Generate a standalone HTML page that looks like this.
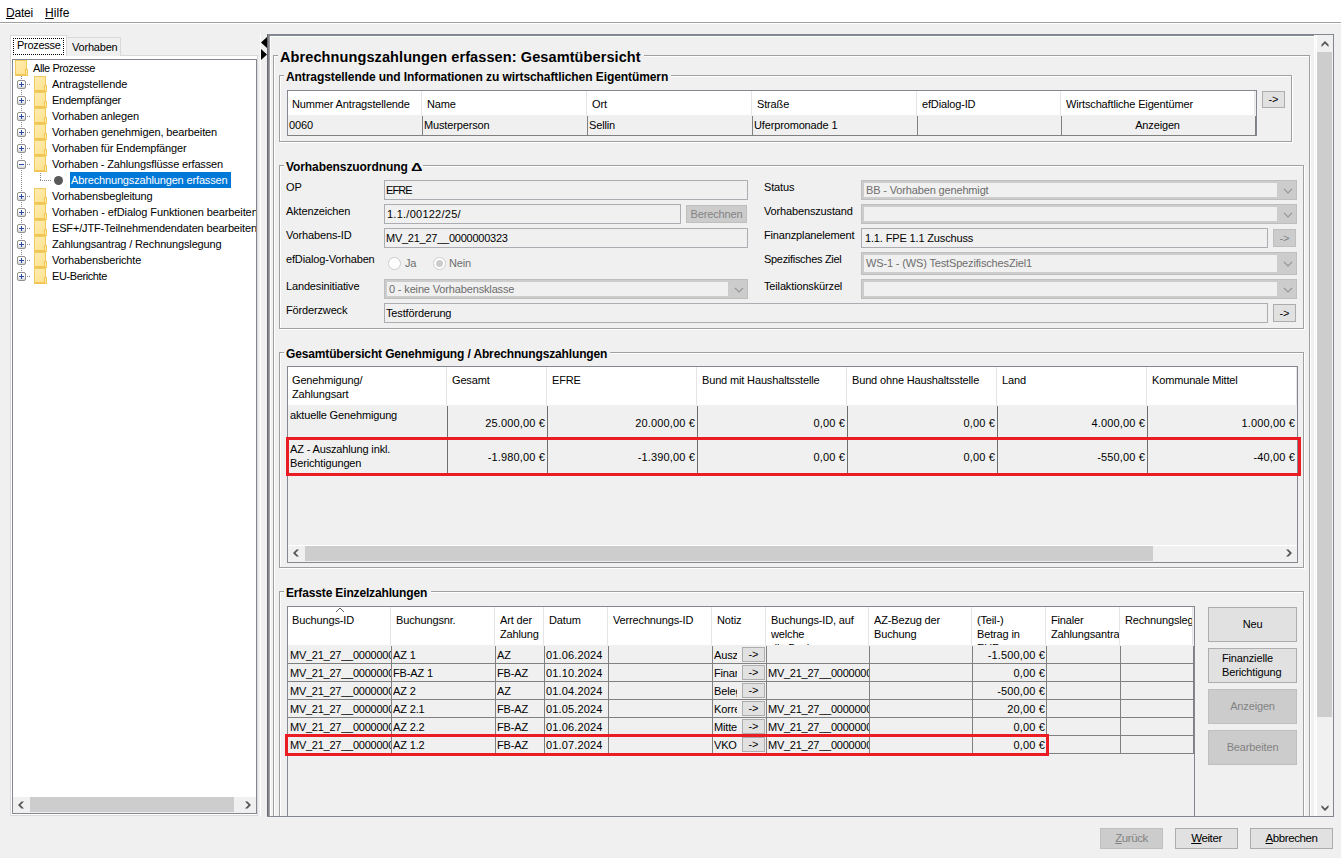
<!DOCTYPE html><html lang="de"><head><meta charset="utf-8"><title>Abrechnungszahlungen erfassen</title><style>
html,body{margin:0;padding:0}
body{width:1341px;height:858px;background:#F0F0F0;position:relative;overflow:hidden;font-family:"Liberation Sans",sans-serif;font-size:11px;color:#000}
div{position:absolute;box-sizing:border-box}
.t{font-size:11px;line-height:13px;height:13px;white-space:nowrap;letter-spacing:-0.15px}
.g{color:#6D6D6D}
.n{letter-spacing:0.15px}
.m{letter-spacing:-0.25px}
.u{font-size:12px;line-height:14px;height:14px;white-space:nowrap}
.ub{font-size:11.5px;letter-spacing:-0.4px}
.eh{border:1px solid #FFFFFF}
.es{border:1px solid #A0A0A0}
.gt{height:14px;line-height:14px;background:#F0F0F0;font-weight:bold;font-size:12px;white-space:nowrap;padding-left:2px;letter-spacing:-0.08px;overflow:hidden}
.tf{border:1px solid #ABADB3;background:#F0F0F0}
.cb{border:3px solid #CCCCCC;background:#F0F0F0}
.cba{background:#CCCCCC}
.btn{background:#E1E1E1;border:1px solid #ADADAD}
.btd{background:#CCCCCC;border:1px solid #BFBFBF}
.tbl{border:1px solid #828790;background:#F0F0F0}
.hd{background:#FFFFFF}
.hs{background:#E5E5E5;width:1px}
.vg{background:#808080;width:1px}
.hg{background:#808080;height:1px}
.clip{overflow:hidden}
.red{border:3px solid #EB1C24}
.tr{font-size:11px;line-height:16px;height:16px;white-space:nowrap;letter-spacing:-0.15px}
.sb{background:#CDCDCD}
svg{position:absolute;overflow:visible}
</style></head><body>
<div style="left:0px;top:0px;width:1341px;height:22px;background:#FFFFFF"></div>
<div style="left:0px;top:22px;width:1341px;height:1px;background:#A0A0A0"></div>
<div style="left:0px;top:23px;width:1341px;height:1px;background:#FFFFFF"></div>
<div class="u" style="left:6px;top:6px;letter-spacing:-0.2px"><u>D</u>atei</div>
<div class="u" style="left:45px;top:6px;letter-spacing:0.1px"><u>H</u>ilfe</div>
<div style="left:10px;top:55px;width:248px;height:761px;border:1px solid #D9D9D9;background:#FFFFFF"></div>
<div style="left:66px;top:37px;width:55px;height:19px;border:1px solid #D9D9D9;border-bottom:none;background:#F0F0F0"></div>
<div style="left:10px;top:35px;width:57px;height:21px;border:1px solid #D9D9D9;border-bottom:none;background:#FFFFFF"></div>
<div style="left:13px;top:38px;width:51px;height:17px;border:1px dotted #000000"></div>
<div class="t" style="left:17px;top:39px;letter-spacing:-0.3px">Prozesse</div>
<div class="t" style="left:72px;top:41px;letter-spacing:-0.2px">Vorhaben</div>
<div style="left:12px;top:59px;width:245px;height:755px;border:1px solid #828790;background:#FFFFFF"></div>
<div class="clip" style="left:13px;top:60px;width:243px;height:737px">
<div style="left:8px;top:16px;width:1px;height:200px;background:repeating-linear-gradient(#8A8A8A 0 1px,transparent 1px 2px)"></div>
<div style="left:2px;top:0px;width:12px;height:16px;border:1px solid #F2CB5E;border-bottom:2px solid #F0C657;background:linear-gradient(135deg,#FFECB0 0%,#FFE28F 100%)"></div>
<div style="left:12px;top:9px;width:3px;height:7px;border:1px solid #F0C657;background:#FFE9A6"></div>
<div class="tr" style="left:20px;top:0px;letter-spacing:-0.4px">Alle Prozesse</div>
<div style="left:14px;top:24px;width:4px;height:1px;background:repeating-linear-gradient(90deg,#8A8A8A 0 1px,transparent 1px 2px)"></div>
<div style="left:4px;top:20px;width:9px;height:9px;border:1px solid #919191;border-radius:2px;background:linear-gradient(#FFFFFF 40%,#D5D5D5 100%)"></div>
<div style="left:6px;top:24px;width:5px;height:1px;background:#2A48A6"></div>
<div style="left:8px;top:22px;width:1px;height:5px;background:#2A48A6"></div>
<div style="left:21px;top:16px;width:12px;height:16px;border:1px solid #F2CB5E;border-bottom:2px solid #F0C657;background:linear-gradient(135deg,#FFECB0 0%,#FFE28F 100%)"></div>
<div style="left:31px;top:25px;width:3px;height:7px;border:1px solid #F0C657;background:#FFE9A6"></div>
<div class="tr" style="left:39px;top:16px;letter-spacing:-0.08px">Antragstellende</div>
<div style="left:14px;top:40px;width:4px;height:1px;background:repeating-linear-gradient(90deg,#8A8A8A 0 1px,transparent 1px 2px)"></div>
<div style="left:4px;top:36px;width:9px;height:9px;border:1px solid #919191;border-radius:2px;background:linear-gradient(#FFFFFF 40%,#D5D5D5 100%)"></div>
<div style="left:6px;top:40px;width:5px;height:1px;background:#2A48A6"></div>
<div style="left:8px;top:38px;width:1px;height:5px;background:#2A48A6"></div>
<div style="left:21px;top:32px;width:12px;height:16px;border:1px solid #F2CB5E;border-bottom:2px solid #F0C657;background:linear-gradient(135deg,#FFECB0 0%,#FFE28F 100%)"></div>
<div style="left:31px;top:41px;width:3px;height:7px;border:1px solid #F0C657;background:#FFE9A6"></div>
<div class="tr" style="left:39px;top:32px;letter-spacing:-0.27px">Endempfänger</div>
<div style="left:14px;top:56px;width:4px;height:1px;background:repeating-linear-gradient(90deg,#8A8A8A 0 1px,transparent 1px 2px)"></div>
<div style="left:4px;top:52px;width:9px;height:9px;border:1px solid #919191;border-radius:2px;background:linear-gradient(#FFFFFF 40%,#D5D5D5 100%)"></div>
<div style="left:6px;top:56px;width:5px;height:1px;background:#2A48A6"></div>
<div style="left:8px;top:54px;width:1px;height:5px;background:#2A48A6"></div>
<div style="left:21px;top:48px;width:12px;height:16px;border:1px solid #F2CB5E;border-bottom:2px solid #F0C657;background:linear-gradient(135deg,#FFECB0 0%,#FFE28F 100%)"></div>
<div style="left:31px;top:57px;width:3px;height:7px;border:1px solid #F0C657;background:#FFE9A6"></div>
<div class="tr" style="left:39px;top:48px">Vorhaben anlegen</div>
<div style="left:14px;top:72px;width:4px;height:1px;background:repeating-linear-gradient(90deg,#8A8A8A 0 1px,transparent 1px 2px)"></div>
<div style="left:4px;top:68px;width:9px;height:9px;border:1px solid #919191;border-radius:2px;background:linear-gradient(#FFFFFF 40%,#D5D5D5 100%)"></div>
<div style="left:6px;top:72px;width:5px;height:1px;background:#2A48A6"></div>
<div style="left:8px;top:70px;width:1px;height:5px;background:#2A48A6"></div>
<div style="left:21px;top:64px;width:12px;height:16px;border:1px solid #F2CB5E;border-bottom:2px solid #F0C657;background:linear-gradient(135deg,#FFECB0 0%,#FFE28F 100%)"></div>
<div style="left:31px;top:73px;width:3px;height:7px;border:1px solid #F0C657;background:#FFE9A6"></div>
<div class="tr" style="left:39px;top:64px;letter-spacing:-0.12px">Vorhaben genehmigen, bearbeiten</div>
<div style="left:14px;top:88px;width:4px;height:1px;background:repeating-linear-gradient(90deg,#8A8A8A 0 1px,transparent 1px 2px)"></div>
<div style="left:4px;top:84px;width:9px;height:9px;border:1px solid #919191;border-radius:2px;background:linear-gradient(#FFFFFF 40%,#D5D5D5 100%)"></div>
<div style="left:6px;top:88px;width:5px;height:1px;background:#2A48A6"></div>
<div style="left:8px;top:86px;width:1px;height:5px;background:#2A48A6"></div>
<div style="left:21px;top:80px;width:12px;height:16px;border:1px solid #F2CB5E;border-bottom:2px solid #F0C657;background:linear-gradient(135deg,#FFECB0 0%,#FFE28F 100%)"></div>
<div style="left:31px;top:89px;width:3px;height:7px;border:1px solid #F0C657;background:#FFE9A6"></div>
<div class="tr" style="left:39px;top:80px">Vorhaben für Endempfänger</div>
<div style="left:14px;top:104px;width:4px;height:1px;background:repeating-linear-gradient(90deg,#8A8A8A 0 1px,transparent 1px 2px)"></div>
<div style="left:4px;top:100px;width:9px;height:9px;border:1px solid #919191;border-radius:2px;background:linear-gradient(#FFFFFF 40%,#D5D5D5 100%)"></div>
<div style="left:6px;top:104px;width:5px;height:1px;background:#2A48A6"></div>
<div style="left:21px;top:96px;width:12px;height:16px;border:1px solid #F2CB5E;border-bottom:2px solid #F0C657;background:linear-gradient(135deg,#FFECB0 0%,#FFE28F 100%)"></div>
<div style="left:31px;top:105px;width:3px;height:7px;border:1px solid #F0C657;background:#FFE9A6"></div>
<div class="tr" style="left:39px;top:96px">Vorhaben - Zahlungsflüsse erfassen</div>
<div style="left:27px;top:113px;width:1px;height:7px;background:repeating-linear-gradient(#8A8A8A 0 1px,transparent 1px 2px)"></div>
<div style="left:27px;top:120px;width:11px;height:1px;background:repeating-linear-gradient(90deg,#8A8A8A 0 1px,transparent 1px 2px)"></div>
<div style="left:41px;top:116px;width:9px;height:9px;border-radius:50%;background:#5A5A5A"></div>
<div class="tr" style="left:57px;top:112px;width:161px;background:#0078D7;color:#FFFFFF;padding-left:1px">Abrechnungszahlungen erfassen</div>
<div style="left:14px;top:136px;width:4px;height:1px;background:repeating-linear-gradient(90deg,#8A8A8A 0 1px,transparent 1px 2px)"></div>
<div style="left:4px;top:132px;width:9px;height:9px;border:1px solid #919191;border-radius:2px;background:linear-gradient(#FFFFFF 40%,#D5D5D5 100%)"></div>
<div style="left:6px;top:136px;width:5px;height:1px;background:#2A48A6"></div>
<div style="left:8px;top:134px;width:1px;height:5px;background:#2A48A6"></div>
<div style="left:21px;top:128px;width:12px;height:16px;border:1px solid #F2CB5E;border-bottom:2px solid #F0C657;background:linear-gradient(135deg,#FFECB0 0%,#FFE28F 100%)"></div>
<div style="left:31px;top:137px;width:3px;height:7px;border:1px solid #F0C657;background:#FFE9A6"></div>
<div class="tr" style="left:39px;top:128px">Vorhabensbegleitung</div>
<div style="left:14px;top:152px;width:4px;height:1px;background:repeating-linear-gradient(90deg,#8A8A8A 0 1px,transparent 1px 2px)"></div>
<div style="left:4px;top:148px;width:9px;height:9px;border:1px solid #919191;border-radius:2px;background:linear-gradient(#FFFFFF 40%,#D5D5D5 100%)"></div>
<div style="left:6px;top:152px;width:5px;height:1px;background:#2A48A6"></div>
<div style="left:8px;top:150px;width:1px;height:5px;background:#2A48A6"></div>
<div style="left:21px;top:144px;width:12px;height:16px;border:1px solid #F2CB5E;border-bottom:2px solid #F0C657;background:linear-gradient(135deg,#FFECB0 0%,#FFE28F 100%)"></div>
<div style="left:31px;top:153px;width:3px;height:7px;border:1px solid #F0C657;background:#FFE9A6"></div>
<div class="tr" style="left:39px;top:144px;letter-spacing:-0.1px">Vorhaben - efDialog Funktionen bearbeiten</div>
<div style="left:14px;top:168px;width:4px;height:1px;background:repeating-linear-gradient(90deg,#8A8A8A 0 1px,transparent 1px 2px)"></div>
<div style="left:4px;top:164px;width:9px;height:9px;border:1px solid #919191;border-radius:2px;background:linear-gradient(#FFFFFF 40%,#D5D5D5 100%)"></div>
<div style="left:6px;top:168px;width:5px;height:1px;background:#2A48A6"></div>
<div style="left:8px;top:166px;width:1px;height:5px;background:#2A48A6"></div>
<div style="left:21px;top:160px;width:12px;height:16px;border:1px solid #F2CB5E;border-bottom:2px solid #F0C657;background:linear-gradient(135deg,#FFECB0 0%,#FFE28F 100%)"></div>
<div style="left:31px;top:169px;width:3px;height:7px;border:1px solid #F0C657;background:#FFE9A6"></div>
<div class="tr" style="left:39px;top:160px">ESF+/JTF-Teilnehmendendaten bearbeiten</div>
<div style="left:14px;top:184px;width:4px;height:1px;background:repeating-linear-gradient(90deg,#8A8A8A 0 1px,transparent 1px 2px)"></div>
<div style="left:4px;top:180px;width:9px;height:9px;border:1px solid #919191;border-radius:2px;background:linear-gradient(#FFFFFF 40%,#D5D5D5 100%)"></div>
<div style="left:6px;top:184px;width:5px;height:1px;background:#2A48A6"></div>
<div style="left:8px;top:182px;width:1px;height:5px;background:#2A48A6"></div>
<div style="left:21px;top:176px;width:12px;height:16px;border:1px solid #F2CB5E;border-bottom:2px solid #F0C657;background:linear-gradient(135deg,#FFECB0 0%,#FFE28F 100%)"></div>
<div style="left:31px;top:185px;width:3px;height:7px;border:1px solid #F0C657;background:#FFE9A6"></div>
<div class="tr" style="left:39px;top:176px">Zahlungsantrag / Rechnungslegung</div>
<div style="left:14px;top:200px;width:4px;height:1px;background:repeating-linear-gradient(90deg,#8A8A8A 0 1px,transparent 1px 2px)"></div>
<div style="left:4px;top:196px;width:9px;height:9px;border:1px solid #919191;border-radius:2px;background:linear-gradient(#FFFFFF 40%,#D5D5D5 100%)"></div>
<div style="left:6px;top:200px;width:5px;height:1px;background:#2A48A6"></div>
<div style="left:8px;top:198px;width:1px;height:5px;background:#2A48A6"></div>
<div style="left:21px;top:192px;width:12px;height:16px;border:1px solid #F2CB5E;border-bottom:2px solid #F0C657;background:linear-gradient(135deg,#FFECB0 0%,#FFE28F 100%)"></div>
<div style="left:31px;top:201px;width:3px;height:7px;border:1px solid #F0C657;background:#FFE9A6"></div>
<div class="tr" style="left:39px;top:192px">Vorhabensberichte</div>
<div style="left:14px;top:216px;width:4px;height:1px;background:repeating-linear-gradient(90deg,#8A8A8A 0 1px,transparent 1px 2px)"></div>
<div style="left:4px;top:212px;width:9px;height:9px;border:1px solid #919191;border-radius:2px;background:linear-gradient(#FFFFFF 40%,#D5D5D5 100%)"></div>
<div style="left:6px;top:216px;width:5px;height:1px;background:#2A48A6"></div>
<div style="left:8px;top:214px;width:1px;height:5px;background:#2A48A6"></div>
<div style="left:21px;top:208px;width:12px;height:16px;border:1px solid #F2CB5E;border-bottom:2px solid #F0C657;background:linear-gradient(135deg,#FFECB0 0%,#FFE28F 100%)"></div>
<div style="left:31px;top:217px;width:3px;height:7px;border:1px solid #F0C657;background:#FFE9A6"></div>
<div class="tr" style="left:39px;top:208px;letter-spacing:-0.4px">EU-Berichte</div>
</div>
<div style="left:13px;top:797px;width:243px;height:16px;background:#F0F0F0"></div>
<div class="sb" style="left:30px;top:797px;width:204px;height:15px;"></div>
<svg style="left:21px;top:805px" width="1" height="1"><polygon points="-3,0 0.5,-3.5 3,-3.5 -0.5,0 3,3.5 0.5,3.5" fill="#555555"/></svg>
<svg style="left:248px;top:805px" width="1" height="1"><polygon points="3,0 -0.5,-3.5 -3,-3.5 0.5,0 -3,3.5 -0.5,3.5" fill="#555555"/></svg>
<div style="left:260px;top:34px;width:1px;height:782px;background:#FFFFFF"></div>
<svg style="left:261px;top:37px" width="7" height="24"><polygon points="0,5.5 6,0 6,11" fill="#000"/><polygon points="0,12 6,17.5 0,23" fill="#000"/></svg>
<div style="left:267px;top:34px;width:1067px;height:783px;border:1px solid #828790"></div>
<div style="left:268px;top:35px;width:1046px;height:781px;border:1px solid #828790;border-right:none;border-bottom:none"></div>
<div style="left:269px;top:36px;width:1045px;height:1px;background:#FFFFFF"></div>
<div style="left:267px;top:34px;width:1px;height:783px;background:#6A6A6A"></div>
<div style="left:269px;top:36px;width:1px;height:780px;background:#A0A0A0"></div>
<div style="left:270px;top:37px;width:1px;height:779px;background:#FFFFFF"></div>
<div style="left:1314px;top:35px;width:3px;height:781px;background:#FFFFFF"></div>
<div style="left:1315px;top:35px;width:1px;height:781px;background:#F6F6F6"></div>
<div style="left:1317px;top:35px;width:16px;height:781px;background:#F0F0F0"></div>
<div class="sb" style="left:1317px;top:52px;width:15px;height:665px;"></div>
<svg style="left:1324.5px;top:44px" width="1" height="1"><polygon points="0,-3 -3.5,0.5 -3.5,3 0,-0.5 3.5,3 3.5,0.5" fill="#555555"/></svg>
<svg style="left:1324.5px;top:808px" width="1" height="1"><polygon points="0,3 -3.5,-0.5 -3.5,-3 0,0.5 3.5,-3 3.5,-0.5" fill="#555555"/></svg>
<div class="eh" style="left:274px;top:56px;width:1037px;height:780px"></div>
<div class="es" style="left:273px;top:55px;width:1037px;height:780px"></div>
<div style="left:278px;top:48px;width:366px;height:18px;background:#F0F0F0;font-weight:bold;font-size:14.5px;line-height:18px;white-space:nowrap;padding-left:2px;letter-spacing:0.1px">Abrechnungszahlungen erfassen: Gesamtübersicht</div>
<div class="eh" style="left:280px;top:76px;width:1013px;height:67px"></div>
<div class="es" style="left:279px;top:75px;width:1013px;height:67px"></div>
<div class="gt" style="left:284px;top:70px;width:387px;letter-spacing:-0.08px"><span>Antragstellende und Informationen zu wirtschaftlichen Eigentümern</span></div>
<div class="tbl" style="left:287px;top:90px;width:970px;height:46px;"></div>
<div class="hd" style="left:288px;top:91px;width:967px;height:24px;"></div>
<div class="t" style="left:292px;top:98px;">Nummer Antragstellende</div>
<div class="vg" style="left:422px;top:116px;width:1px;height:19px;"></div>
<div class="t" style="left:289px;top:119px;">0060</div>
<div class="t" style="left:427px;top:98px;">Name</div>
<div class="hs" style="left:421px;top:91px;width:1px;height:24px;"></div>
<div class="vg" style="left:587px;top:116px;width:1px;height:19px;"></div>
<div class="t" style="left:424px;top:119px;">Musterperson</div>
<div class="t" style="left:592px;top:98px;">Ort</div>
<div class="hs" style="left:586px;top:91px;width:1px;height:24px;"></div>
<div class="vg" style="left:752px;top:116px;width:1px;height:19px;"></div>
<div class="t" style="left:589px;top:119px;">Sellin</div>
<div class="t" style="left:757px;top:98px;">Straße</div>
<div class="hs" style="left:751px;top:91px;width:1px;height:24px;"></div>
<div class="vg" style="left:917px;top:116px;width:1px;height:19px;"></div>
<div class="t" style="left:754px;top:119px;">Uferpromonade 1</div>
<div class="t" style="left:922px;top:98px;">efDialog-ID</div>
<div class="hs" style="left:916px;top:91px;width:1px;height:24px;"></div>
<div class="vg" style="left:1061px;top:116px;width:1px;height:19px;"></div>
<div class="t" style="left:1066px;top:98px;">Wirtschaftliche Eigentümer</div>
<div class="hs" style="left:1060px;top:91px;width:1px;height:24px;"></div>
<div class="vg" style="left:1255px;top:116px;width:1px;height:19px;"></div>
<div class="hs" style="left:1254px;top:91px;width:1px;height:24px;"></div>
<div class="t" style="left:1061px;top:119px;width:193px;text-align:center">Anzeigen</div>
<div class="hg" style="left:288px;top:135px;width:968px;height:1px;"></div>
<div class="btn" style="left:1262px;top:91px;width:23px;height:17px;"></div>
<div class="t" style="left:1262px;top:93px;width:23px;text-align:center">-&gt;</div>
<div class="eh" style="left:280px;top:166px;width:1025px;height:164px"></div>
<div class="es" style="left:279px;top:165px;width:1025px;height:164px"></div>
<div class="gt" style="left:284px;top:160px;width:139px;letter-spacing:-0.08px"><span>Vorhabenszuordnung <span style="display:inline-block;transform:scaleX(1.45);transform-origin:0 50%;font-size:11px">Δ</span></span></div>
<div class="t" style="left:286px;top:181px;">OP</div>
<div class="t" style="left:286px;top:205px;">Aktenzeichen</div>
<div class="t" style="left:286px;top:229px;">Vorhabens-ID</div>
<div class="t" style="left:286px;top:253px;">efDialog-Vorhaben</div>
<div class="t" style="left:286px;top:280px;">Landesinitiative</div>
<div class="t" style="left:286px;top:304px;">Förderzweck</div>
<div class="tf" style="left:384px;top:180px;width:364px;height:20px;"></div>
<div class="t" style="left:386px;top:184px;letter-spacing:-0.9px">EFRE</div>
<div class="tf" style="left:384px;top:204px;width:297px;height:20px;"></div>
<div class="t" style="left:387px;top:208px;letter-spacing:0.25px">1.1./00122/25/</div>
<div class="btd" style="left:686px;top:205px;width:61px;height:18px;"></div>
<div class="t g" style="left:686px;top:208px;width:61px;text-align:center;color:#838383">Berechnen</div>
<div class="tf" style="left:384px;top:228px;width:364px;height:20px;"></div>
<div class="t m" style="left:386px;top:232px;">MV_21_27__0000000323</div>
<div style="left:388px;top:257px;width:13px;height:13px;border:1px solid #CCCCCC;border-radius:50%;background:#FFFFFF"></div>
<div class="t g" style="left:405px;top:257px;">Ja</div>
<div style="left:433px;top:257px;width:13px;height:13px;border:1px solid #CCCCCC;border-radius:50%;background:#FFFFFF"></div>
<div style="left:436px;top:260px;width:7px;height:7px;border-radius:50%;background:#CCCCCC"></div>
<div class="t g" style="left:449px;top:257px;">Nein</div>
<div class="cb" style="left:384px;top:279px;width:364px;height:20px;"></div>
<div class="cba" style="left:728px;top:279px;width:20px;height:20px;"></div>
<div style="left:384px;top:279px;width:364px;height:20px;border:1px solid #BFBFBF"></div>
<svg style="left:739px;top:289.5px" width="1" height="1"><polyline points="-4,-2 0,2 4,-2" fill="none" stroke="#969696" stroke-width="1.1"/></svg>
<div class="t g" style="left:389px;top:283px;">0 - keine Vorhabensklasse</div>
<div class="tf" style="left:384px;top:303px;width:884px;height:20px;"></div>
<div class="t" style="left:386px;top:307px;">Testförderung</div>
<div class="btn" style="left:1273px;top:304px;width:23px;height:18px;"></div>
<div class="t" style="left:1273px;top:307px;width:23px;text-align:center">-&gt;</div>
<div class="t" style="left:764px;top:181px;">Status</div>
<div class="t" style="left:764px;top:205px;">Vorhabenszustand</div>
<div class="t" style="left:764px;top:229px;">Finanzplanelement</div>
<div class="t" style="left:764px;top:253px;letter-spacing:-0.3px">Spezifisches Ziel</div>
<div class="t" style="left:764px;top:280px;">Teilaktionskürzel</div>
<div class="cb" style="left:861px;top:180px;width:436px;height:20px;"></div>
<div class="cba" style="left:1277px;top:180px;width:20px;height:20px;"></div>
<div style="left:861px;top:180px;width:436px;height:20px;border:1px solid #BFBFBF"></div>
<svg style="left:1288px;top:190.5px" width="1" height="1"><polyline points="-4,-2 0,2 4,-2" fill="none" stroke="#969696" stroke-width="1.1"/></svg>
<div class="t g" style="left:866px;top:184px;">BB - Vorhaben genehmigt</div>
<div class="cb" style="left:861px;top:204px;width:436px;height:20px;"></div>
<div class="cba" style="left:1277px;top:204px;width:20px;height:20px;"></div>
<div style="left:861px;top:204px;width:436px;height:20px;border:1px solid #BFBFBF"></div>
<svg style="left:1288px;top:214.5px" width="1" height="1"><polyline points="-4,-2 0,2 4,-2" fill="none" stroke="#969696" stroke-width="1.1"/></svg>
<div class="tf" style="left:861px;top:228px;width:407px;height:20px;"></div>
<div class="t" style="left:865px;top:232px;">1.1. FPE 1.1 Zuschuss</div>
<div class="btd" style="left:1273px;top:229px;width:23px;height:18px;"></div>
<div class="t g" style="left:1273px;top:232px;width:23px;text-align:center;color:#838383">-&gt;</div>
<div class="cb" style="left:861px;top:252px;width:436px;height:23px;"></div>
<div class="cba" style="left:1277px;top:252px;width:20px;height:23px;"></div>
<div style="left:861px;top:252px;width:436px;height:23px;border:1px solid #BFBFBF"></div>
<svg style="left:1288px;top:264.0px" width="1" height="1"><polyline points="-4,-2 0,2 4,-2" fill="none" stroke="#969696" stroke-width="1.1"/></svg>
<div class="t g" style="left:866px;top:257px;">WS-1 - (WS) TestSpezifischesZiel1</div>
<div class="cb" style="left:861px;top:279px;width:436px;height:20px;"></div>
<div class="cba" style="left:1277px;top:279px;width:20px;height:20px;"></div>
<div style="left:861px;top:279px;width:436px;height:20px;border:1px solid #BFBFBF"></div>
<svg style="left:1288px;top:289.5px" width="1" height="1"><polyline points="-4,-2 0,2 4,-2" fill="none" stroke="#969696" stroke-width="1.1"/></svg>
<div class="eh" style="left:280px;top:353px;width:1025px;height:216px"></div>
<div class="es" style="left:279px;top:352px;width:1025px;height:216px"></div>
<div class="gt" style="left:284px;top:347px;width:326px;letter-spacing:-0.14px"><span>Gesamtübersicht Genehmigung / Abrechnungszahlungen</span></div>
<div class="tbl" style="left:287px;top:366px;width:1011px;height:197px;"></div>
<div class="hd" style="left:288px;top:367px;width:1008px;height:38px;"></div>
<div class="t" style="left:292px;top:373px;height:28px;line-height:14px;white-space:nowrap">Genehmigung/<br>Zahlungsart</div>
<div style="left:447px;top:406px;width:1px;height:67px;background:#6E6E6E;width:1px"></div>
<div class="t" style="left:290px;top:409px;">aktuelle Genehmigung</div>
<div class="t" style="left:290px;top:442px;height:28px;line-height:14px">AZ - Auszahlung inkl.<br>Berichtigungen</div>
<div class="t" style="left:452px;top:373px;height:28px;line-height:14px;white-space:nowrap">Gesamt</div>
<div class="hs" style="left:446px;top:367px;width:1px;height:38px;"></div>
<div style="left:547px;top:406px;width:1px;height:67px;background:#6E6E6E;width:1px"></div>
<div class="t n" style="left:447px;top:417px;width:98px;text-align:right">25.000,00 €</div>
<div class="t n" style="left:447px;top:451px;width:98px;text-align:right">-1.980,00 €</div>
<div class="t" style="left:552px;top:373px;height:28px;line-height:14px;white-space:nowrap">EFRE</div>
<div class="hs" style="left:546px;top:367px;width:1px;height:38px;"></div>
<div style="left:697px;top:406px;width:1px;height:67px;background:#6E6E6E;width:1px"></div>
<div class="t n" style="left:547px;top:417px;width:148px;text-align:right">20.000,00 €</div>
<div class="t n" style="left:547px;top:451px;width:148px;text-align:right">-1.390,00 €</div>
<div class="t" style="left:702px;top:373px;height:28px;line-height:14px;white-space:nowrap">Bund mit Haushaltsstelle</div>
<div class="hs" style="left:696px;top:367px;width:1px;height:38px;"></div>
<div style="left:847px;top:406px;width:1px;height:67px;background:#6E6E6E;width:1px"></div>
<div class="t n" style="left:697px;top:417px;width:148px;text-align:right">0,00 €</div>
<div class="t n" style="left:697px;top:451px;width:148px;text-align:right">0,00 €</div>
<div class="t" style="left:852px;top:373px;height:28px;line-height:14px;white-space:nowrap">Bund ohne Haushaltsstelle</div>
<div class="hs" style="left:846px;top:367px;width:1px;height:38px;"></div>
<div style="left:997px;top:406px;width:1px;height:67px;background:#6E6E6E;width:1px"></div>
<div class="t n" style="left:847px;top:417px;width:148px;text-align:right">0,00 €</div>
<div class="t n" style="left:847px;top:451px;width:148px;text-align:right">0,00 €</div>
<div class="t" style="left:1002px;top:373px;height:28px;line-height:14px;white-space:nowrap">Land</div>
<div class="hs" style="left:996px;top:367px;width:1px;height:38px;"></div>
<div style="left:1147px;top:406px;width:1px;height:67px;background:#6E6E6E;width:1px"></div>
<div class="t n" style="left:997px;top:417px;width:148px;text-align:right">4.000,00 €</div>
<div class="t n" style="left:997px;top:451px;width:148px;text-align:right">-550,00 €</div>
<div class="t" style="left:1152px;top:373px;height:28px;line-height:14px;white-space:nowrap">Kommunale Mittel</div>
<div class="hs" style="left:1146px;top:367px;width:1px;height:38px;"></div>
<div class="t n" style="left:1147px;top:417px;width:148px;text-align:right">1.000,00 €</div>
<div class="t n" style="left:1147px;top:451px;width:148px;text-align:right">-40,00 €</div>
<div class="hs" style="left:1296px;top:367px;width:1px;height:38px;"></div>
<div class="red" style="left:286px;top:437px;width:1015px;height:39px;"></div>
<div style="left:288px;top:545px;width:1009px;height:17px;background:#F0F0F0"></div>
<div style="left:288px;top:545px;width:1009px;height:1px;background:#FFFFFF"></div>
<div class="sb" style="left:305px;top:546px;width:848px;height:15px;"></div>
<svg style="left:296px;top:553px" width="1" height="1"><polygon points="-3,0 0.5,-3.5 3,-3.5 -0.5,0 3,3.5 0.5,3.5" fill="#555555"/></svg>
<svg style="left:1288.5px;top:553px" width="1" height="1"><polygon points="3,0 -0.5,-3.5 -3,-3.5 0.5,0 -3,3.5 -0.5,3.5" fill="#555555"/></svg>
<div class="eh" style="left:280px;top:592px;width:1025px;height:240px"></div>
<div class="es" style="left:279px;top:591px;width:1025px;height:240px"></div>
<div class="gt" style="left:284px;top:586px;width:147px;letter-spacing:-0.15px"><span>Erfasste Einzelzahlungen</span></div>
<div class="clip" style="left:274px;top:600px;width:1036px;height:216px">
<div class="tbl" style="left:13px;top:6px;width:908px;height:230px;"></div>
<div class="hd" style="left:14px;top:7px;width:905px;height:38px;"></div>
<div class="t clip" style="left:18px;top:13px;width:98px;height:32px;line-height:14px;white-space:nowrap">Buchungs-ID</div>
<div class="vg" style="left:117px;top:46px;width:1px;height:108px;"></div>
<div class="t clip" style="left:122px;top:13px;width:98px;height:32px;line-height:14px;white-space:nowrap">Buchungsnr.</div>
<div class="hs" style="left:116px;top:7px;width:1px;height:38px;"></div>
<div class="vg" style="left:221px;top:46px;width:1px;height:108px;"></div>
<div class="t clip" style="left:226px;top:13px;width:43px;height:32px;line-height:14px;white-space:nowrap">Art der<br>Zahlung</div>
<div class="hs" style="left:220px;top:7px;width:1px;height:38px;"></div>
<div class="vg" style="left:270px;top:46px;width:1px;height:108px;"></div>
<div class="t clip" style="left:275px;top:13px;width:58px;height:32px;line-height:14px;white-space:nowrap">Datum</div>
<div class="hs" style="left:269px;top:7px;width:1px;height:38px;"></div>
<div class="vg" style="left:334px;top:46px;width:1px;height:108px;"></div>
<div class="t clip" style="left:339px;top:13px;width:98px;height:32px;line-height:14px;white-space:nowrap">Verrechnungs-ID</div>
<div class="hs" style="left:333px;top:7px;width:1px;height:38px;"></div>
<div class="vg" style="left:438px;top:46px;width:1px;height:108px;"></div>
<div class="t clip" style="left:443px;top:13px;width:48px;height:32px;line-height:14px;white-space:nowrap">Notiz</div>
<div class="hs" style="left:437px;top:7px;width:1px;height:38px;"></div>
<div class="vg" style="left:492px;top:46px;width:1px;height:108px;"></div>
<div class="t clip" style="left:497px;top:13px;width:97px;height:32px;line-height:14px;white-space:nowrap">Buchungs-ID, auf<br>welche<br>die Buchung</div>
<div class="hs" style="left:491px;top:7px;width:1px;height:38px;"></div>
<div class="vg" style="left:595px;top:46px;width:1px;height:108px;"></div>
<div class="t clip" style="left:600px;top:13px;width:97px;height:32px;line-height:14px;white-space:nowrap">AZ-Bezug der<br>Buchung</div>
<div class="hs" style="left:594px;top:7px;width:1px;height:38px;"></div>
<div class="vg" style="left:698px;top:46px;width:1px;height:108px;"></div>
<div class="t clip" style="left:703px;top:13px;width:68px;height:32px;line-height:14px;white-space:nowrap">(Teil-)<br>Betrag in<br>EUR</div>
<div class="hs" style="left:697px;top:7px;width:1px;height:38px;"></div>
<div class="vg" style="left:772px;top:46px;width:1px;height:108px;"></div>
<div class="t clip" style="left:777px;top:13px;width:68px;height:32px;line-height:14px;white-space:nowrap">Finaler<br>Zahlungsantrag</div>
<div class="hs" style="left:771px;top:7px;width:1px;height:38px;"></div>
<div class="vg" style="left:846px;top:46px;width:1px;height:108px;"></div>
<div class="t clip" style="left:851px;top:13px;width:67px;height:32px;line-height:14px;white-space:nowrap">Rechnungslegung</div>
<div class="hs" style="left:845px;top:7px;width:1px;height:38px;"></div>
<div class="vg" style="left:919px;top:46px;width:1px;height:108px;"></div>
<div class="hs" style="left:918px;top:7px;width:1px;height:38px;"></div>
<div class="hg" style="left:14px;top:63px;width:906px;height:1px;"></div>
<div class="t m clip" style="left:16px;top:49px;width:101px">MV_21_27__0000000323</div>
<div class="t clip" style="left:119px;top:49px;width:102px">AZ 1</div>
<div class="t clip" style="left:223px;top:49px;width:47px">AZ</div>
<div class="t n clip" style="left:272px;top:49px;width:62px">01.06.2024</div>
<div class="t clip" style="left:440px;top:49px;width:23px">Auszahlung</div>
<div class="t n" style="left:698px;top:49px;width:73px;text-align:right">-1.500,00 €</div>
<div class="btn" style="left:468px;top:47px;width:23px;height:15px;"></div>
<div class="t" style="left:468px;top:48px;width:23px;text-align:center">-&gt;</div>
<div class="hg" style="left:14px;top:81px;width:906px;height:1px;"></div>
<div class="t m clip" style="left:16px;top:67px;width:101px">MV_21_27__0000000323</div>
<div class="t clip" style="left:119px;top:67px;width:102px">FB-AZ 1</div>
<div class="t clip" style="left:223px;top:67px;width:47px">FB-AZ</div>
<div class="t n clip" style="left:272px;top:67px;width:62px">01.10.2024</div>
<div class="t clip" style="left:440px;top:67px;width:23px">Finanzielle</div>
<div class="t m clip" style="left:494px;top:67px;width:101px">MV_21_27__0000000323</div>
<div class="t n" style="left:698px;top:67px;width:73px;text-align:right">0,00 €</div>
<div class="btn" style="left:468px;top:65px;width:23px;height:15px;"></div>
<div class="t" style="left:468px;top:66px;width:23px;text-align:center">-&gt;</div>
<div class="hg" style="left:14px;top:99px;width:906px;height:1px;"></div>
<div class="t m clip" style="left:16px;top:85px;width:101px">MV_21_27__0000000323</div>
<div class="t clip" style="left:119px;top:85px;width:102px">AZ 2</div>
<div class="t clip" style="left:223px;top:85px;width:47px">AZ</div>
<div class="t n clip" style="left:272px;top:85px;width:62px">01.04.2024</div>
<div class="t clip" style="left:440px;top:85px;width:23px">Beleg</div>
<div class="t n" style="left:698px;top:85px;width:73px;text-align:right">-500,00 €</div>
<div class="btn" style="left:468px;top:83px;width:23px;height:15px;"></div>
<div class="t" style="left:468px;top:84px;width:23px;text-align:center">-&gt;</div>
<div class="hg" style="left:14px;top:117px;width:906px;height:1px;"></div>
<div class="t m clip" style="left:16px;top:103px;width:101px">MV_21_27__0000000323</div>
<div class="t clip" style="left:119px;top:103px;width:102px">AZ 2.1</div>
<div class="t clip" style="left:223px;top:103px;width:47px">FB-AZ</div>
<div class="t n clip" style="left:272px;top:103px;width:62px">01.05.2024</div>
<div class="t clip" style="left:440px;top:103px;width:23px">Korrektur</div>
<div class="t m clip" style="left:494px;top:103px;width:101px">MV_21_27__0000000323</div>
<div class="t n" style="left:698px;top:103px;width:73px;text-align:right">20,00 €</div>
<div class="btn" style="left:468px;top:101px;width:23px;height:15px;"></div>
<div class="t" style="left:468px;top:102px;width:23px;text-align:center">-&gt;</div>
<div class="hg" style="left:14px;top:135px;width:906px;height:1px;"></div>
<div class="t m clip" style="left:16px;top:121px;width:101px">MV_21_27__0000000323</div>
<div class="t clip" style="left:119px;top:121px;width:102px">AZ 2.2</div>
<div class="t clip" style="left:223px;top:121px;width:47px">FB-AZ</div>
<div class="t n clip" style="left:272px;top:121px;width:62px">01.06.2024</div>
<div class="t clip" style="left:440px;top:121px;width:23px">Mitteilung</div>
<div class="t m clip" style="left:494px;top:121px;width:101px">MV_21_27__0000000323</div>
<div class="t n" style="left:698px;top:121px;width:73px;text-align:right">0,00 €</div>
<div class="btn" style="left:468px;top:119px;width:23px;height:15px;"></div>
<div class="t" style="left:468px;top:120px;width:23px;text-align:center">-&gt;</div>
<div class="hg" style="left:14px;top:153px;width:906px;height:1px;"></div>
<div class="t m clip" style="left:16px;top:139px;width:101px">MV_21_27__0000000323</div>
<div class="t clip" style="left:119px;top:139px;width:102px">AZ 1.2</div>
<div class="t clip" style="left:223px;top:139px;width:47px">FB-AZ</div>
<div class="t n clip" style="left:272px;top:139px;width:62px">01.07.2024</div>
<div class="t clip" style="left:440px;top:139px;width:23px">VKO</div>
<div class="t m clip" style="left:494px;top:139px;width:101px">MV_21_27__0000000323</div>
<div class="t n" style="left:698px;top:139px;width:73px;text-align:right">0,00 €</div>
<div class="btn" style="left:468px;top:137px;width:23px;height:15px;"></div>
<div class="t" style="left:468px;top:138px;width:23px;text-align:center">-&gt;</div>
<svg style="left:66px;top:10px" width="1" height="1"><polyline points="-4,2 0,-2 4,2" fill="none" stroke="#606060" stroke-width="1"/></svg>
<div class="red" style="left:11px;top:134px;width:764px;height:22px;"></div>
<div class="btn" style="left:934px;top:7px;width:89px;height:35px;"></div>
<div class="t" style="left:934px;top:18px;width:89px;text-align:center">Neu</div>
<div class="btn" style="left:934px;top:48px;width:89px;height:35px;"></div>
<div class="t" style="left:948px;top:51px;height:28px;line-height:14px">Finanzielle<br>Berichtigung</div>
<div class="btd" style="left:934px;top:89px;width:89px;height:35px;"></div>
<div class="t" style="left:934px;top:100px;width:89px;text-align:center;color:#838383">Anzeigen</div>
<div class="btd" style="left:934px;top:130px;width:89px;height:35px;"></div>
<div class="t" style="left:934px;top:141px;width:89px;text-align:center;color:#838383">Bearbeiten</div>
</div>
<div style="left:267px;top:816px;width:1067px;height:1px;background:#828790"></div>
<div style="left:0px;top:817px;width:1341px;height:41px;background:#F0F0F0"></div>
<div class="btd" style="left:1100px;top:828px;width:63px;height:21px;"></div>
<div class="u ub" style="left:1100px;top:831px;width:63px;text-align:center;color:#838383"><u>Z</u>urück</div>
<div class="btn" style="left:1175px;top:828px;width:63px;height:21px;"></div>
<div class="u ub" style="left:1175px;top:831px;width:63px;text-align:center"><u>W</u>eiter</div>
<div class="btn" style="left:1250px;top:828px;width:83px;height:21px;"></div>
<div class="u ub" style="left:1250px;top:831px;width:83px;text-align:center"><u>A</u>bbrechen</div>
</body></html>
